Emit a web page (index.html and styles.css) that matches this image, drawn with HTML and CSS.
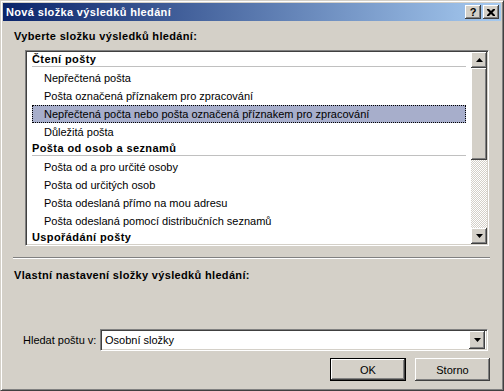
FILE: index.html
```html
<!DOCTYPE html>
<html lang="cs">
<head>
  <meta charset="UTF-8">
  <title>Nová složka výsledků hledání</title>
  <link rel="stylesheet" href="styles.css">
</head>
<body>

  <div class="window">
    <!-- titulek okna -->
    <div class="titlebar">
      <span class="title">Nová složka výsledků hledání</span>
      <div class="caption-btns">
        <span class="cap-btn help">?</span>
        <span class="cap-btn close">
          <svg width="8" height="7" viewBox="0 0 8 7">
            <path d="M0 0h2l2 2 2-2h2v1L5.5 3.5 8 6v1H6L4 5 2 7H0V6l2.5-2.5L0 1z" fill="#000"/>
          </svg>
        </span>
      </div>
    </div>

    <div class="content">
      <div class="group-label">Vyberte složku výsledků hledání:</div>

      <div class="listbox">
        <div class="list-items">
          <div class="list-head">Čtení pošty</div>
          <div class="list-item">Nepřečtená pošta</div>
          <div class="list-item">Pošta označená příznakem pro zpracování</div>
          <div class="list-item selected">Nepřečtená počta nebo pošta označená příznakem pro zpracování</div>
          <div class="list-item">Důležitá pošta</div>
          <div class="list-head">Pošta od osob a seznamů</div>
          <div class="list-item">Pošta od a pro určité osoby</div>
          <div class="list-item">Pošta od určitých osob</div>
          <div class="list-item">Pošta odeslaná přímo na mou adresu</div>
          <div class="list-item">Pošta odeslaná pomocí distribučních seznamů</div>
          <div class="list-head">Uspořádání pošty</div>
        </div>
        <div class="scrollbar">
          <div class="sb-btn">
            <svg width="7" height="4" viewBox="0 0 7 4"><polygon points="3.5,0 7,4 0,4" fill="#000"/></svg>
          </div>
          <div class="sb-thumb"></div>
          <div class="sb-track"></div>
          <div class="sb-btn">
            <svg width="7" height="4" viewBox="0 0 7 4"><polygon points="0,0 7,0 3.5,4" fill="#000"/></svg>
          </div>
        </div>
      </div>

      <div class="etched"></div>

      <div class="group-label custom">Vlastní nastavení složky výsledků hledání:</div>

      <div class="search-row">
        <label class="search-label">Hledat poštu v:</label>
        <div class="combo">
          <span class="combo-text">Osobní složky</span>
          <span class="combo-btn">
            <svg width="7" height="4" viewBox="0 0 7 4"><polygon points="0,0 7,0 3.5,4" fill="#000"/></svg>
          </span>
        </div>
      </div>

      <div class="buttons">
        <button class="btn default">OK</button>
        <button class="btn">Storno</button>
      </div>
    </div>
  </div>

</body>
</html>
```

FILE: styles.css
```css
body {
  margin: 0;
  font-family: Tahoma, 'Liberation Sans', Arial, sans-serif;
  font-size: 11px;
  color: #000;
  background: #d4d0c8;
}

/* okno ve stylu Windows Classic */
.window {
  width: 504px;
  height: 391px;
  box-sizing: border-box;
  background: #d4d0c8;
  border: 1px solid;
  border-color: #d4d0c8 #404040 #404040 #d4d0c8;
  box-shadow: inset 1px 1px #fff, inset -1px -1px #808080;
  padding: 2px;
  display: flex;
  flex-direction: column;
}

.titlebar {
  height: 18px;
  display: flex;
  align-items: center;
  justify-content: space-between;
  padding: 0 2px 0 2px;
  background: linear-gradient(to right, #0a246a, #a6caf0);
}
.title {
  color: #fff;
  font-weight: bold;
  letter-spacing: 0.35px;
  padding-left: 1px;
}
.caption-btns {
  display: flex;
  gap: 2px;
}
.cap-btn {
  width: 16px;
  height: 14px;
  box-sizing: border-box;
  background: #d4d0c8;
  box-shadow: inset -1px -1px #404040, inset 1px 1px #fff, inset -2px -2px #808080;
  display: flex;
  align-items: center;
  justify-content: center;
  font-weight: bold;
  line-height: 14px;
}

.content {
  flex: 1;
  display: flex;
  flex-direction: column;
  padding: 0 11px 7px 11px;
}
.group-label {
  font-weight: bold;
  letter-spacing: 0.33px;
  line-height: 14px;
  margin-top: 8px;
}
.group-label.custom {
  margin-top: 9px;
  flex: 1;
}

/* seznam složek */
.listbox {
  margin: 7px 1px 0 11px;
  height: 196px;
  box-sizing: border-box;
  border: 1px solid;
  border-color: #808080 #fff #fff #808080;
  box-shadow: inset 1px 1px #404040, inset -1px -1px #d4d0c8;
  padding: 1px;
  background: #fff;
  display: flex;
  overflow: hidden;
}
.list-items {
  flex: 1;
  padding: 0 5px 0 5px;
  overflow: hidden;
}
.list-head {
  font-weight: bold;
  letter-spacing: 0.4px;
  height: 14px;
  line-height: 14px;
  border-bottom: 1px solid #c0c0c0;
  margin-bottom: 2px;
  white-space: nowrap;
}
.list-item {
  height: 18px;
  line-height: 18px;
  padding-left: 12px;
  box-sizing: border-box;
  white-space: nowrap;
}
.list-item.selected {
  background: #a7aecb;
  outline: 1px dotted #000;
  outline-offset: -1px;
}

.scrollbar {
  width: 16px;
  display: flex;
  flex-direction: column;
}
.sb-btn, .sb-thumb {
  background: #d4d0c8;
  box-shadow: inset -1px -1px #404040, inset 1px 1px #fff, inset -2px -2px #808080;
}
.sb-btn {
  height: 16px;
  display: flex;
  align-items: center;
  justify-content: center;
}
.sb-thumb {
  height: 92px;
}
.sb-track {
  flex: 1;
  background: repeating-conic-gradient(#fff 0 25%, #d4d0c8 0 50%) 0 0 / 2px 2px;
}

.etched {
  margin: 11px 0 0 -1px;
  border-top: 1px solid #808080;
  border-bottom: 1px solid #fff;
}

/* vyhledávání */
.search-row {
  display: flex;
  align-items: center;
  margin: 0 2px 0 9px;
}
.search-label {
  width: 77px;
}
.combo {
  flex: 1;
  height: 22px;
  box-sizing: border-box;
  border: 1px solid;
  border-color: #808080 #fff #fff #808080;
  box-shadow: inset 1px 1px #404040, inset -1px -1px #d4d0c8;
  background: #fff;
  padding: 2px;
  display: flex;
  align-items: center;
}
.combo-text {
  flex: 1;
  padding-left: 2px;
}
.combo-btn {
  width: 16px;
  height: 18px;
  background: #d4d0c8;
  box-shadow: inset -1px -1px #404040, inset 1px 1px #fff, inset -2px -2px #808080;
  display: flex;
  align-items: center;
  justify-content: center;
}

.buttons {
  display: flex;
  justify-content: flex-end;
  gap: 9px;
  margin-top: 7px;
}
.btn {
  width: 75px;
  height: 23px;
  font-family: inherit;
  font-size: 11px;
  background: #d4d0c8;
  border: none;
  padding: 0;
  box-shadow: inset -1px -1px #404040, inset 1px 1px #fff, inset -2px -2px #808080;
}
.btn.default {
  width: 76px;
  border: 1px solid #000;
}
```
